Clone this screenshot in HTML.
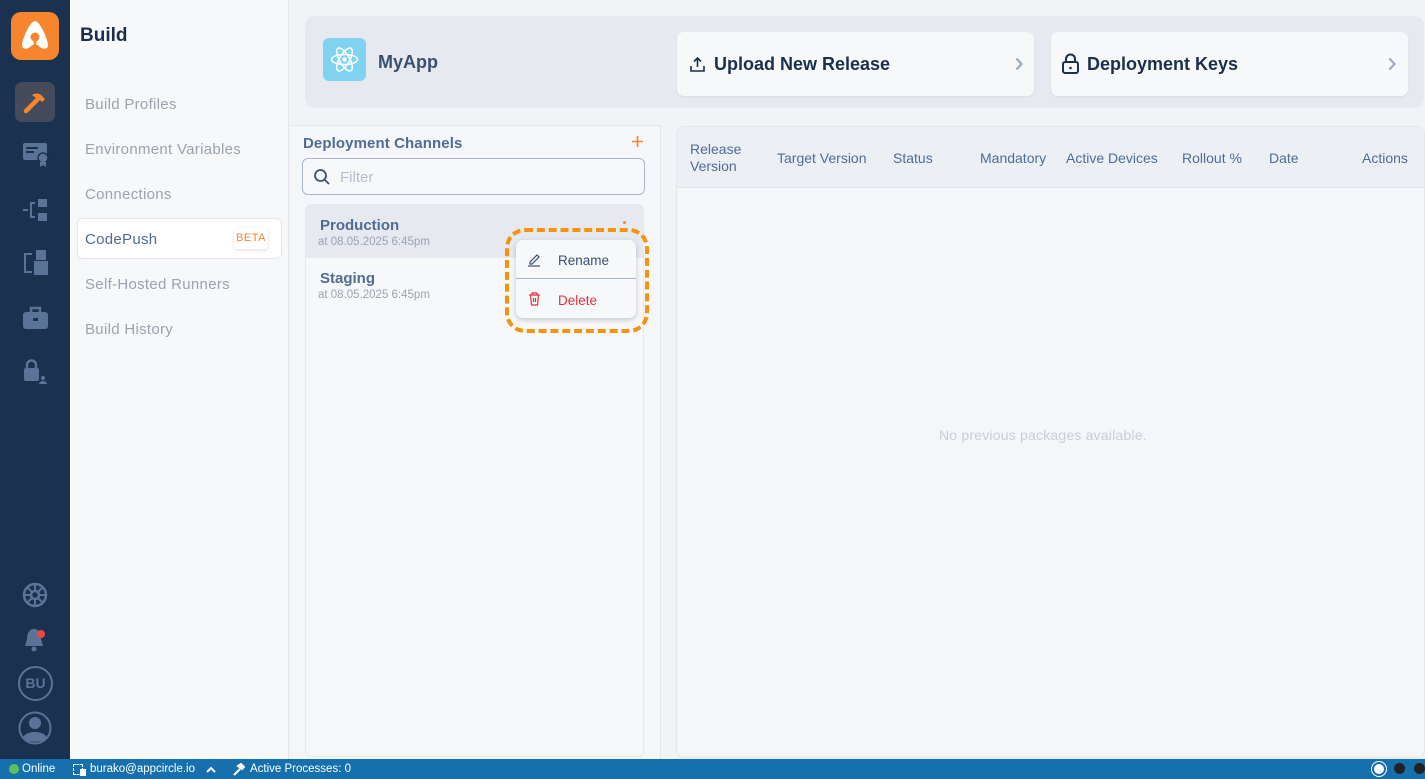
<!DOCTYPE html>
<html><head><style>
*{box-sizing:border-box;margin:0;padding:0}
body{width:1425px;height:779px;overflow:hidden;font-family:"Liberation Sans",sans-serif;background:#f2f3f7;position:relative}
.abs{position:absolute}
.side{left:0;top:0;width:70px;height:759px;background:#1b3150}
.nav{left:70px;top:0;width:219px;height:759px;background:#f7f8fa;border-right:1px solid #e4e6eb}
.nav .it{position:absolute;left:15px;font-size:15px;color:#9aa3ae;letter-spacing:.3px}
.status{left:0;top:759px;width:1425px;height:20px;background:#1670ad;color:#fff;font-size:11.5px}
.ic{position:absolute;left:22px}
.th{position:absolute;top:150px;font-size:14px;color:#4f6c95}
</style></head><body>
<div class="abs side">
  <div class="abs" style="left:11px;top:12px;width:48px;height:48px;border-radius:10px;background:#f7852d">
    <svg width="48" height="48" viewBox="0 0 48 48"><path d="M24 9 C19 9 11 28 11 33 C11 37 15 38 19 35 L21 33 L27 33 L29 35 C33 38 37 37 37 33 C37 28 29 9 24 9Z" fill="#fff"/><circle cx="24" cy="25" r="4.5" fill="#f7852d"/><rect x="22.6" y="28" width="2.8" height="7" fill="#f7852d"/></svg>
  </div>
  <div class="abs" style="left:15px;top:82px;width:40px;height:40px;border-radius:7px;background:#444b5a">
    <svg width="40" height="40" viewBox="0 0 40 40"><path d="M11 29 L22 18" stroke="#f7852d" stroke-width="4.5" stroke-linecap="round"/><path d="M17 13 C20 11 24 11 26 13 L30 17 L27 20 L25 18 L22 21 L19 18 L21 16 Z" fill="#f7852d"/></svg>
  </div>
  <svg class="ic" style="top:140px" width="28" height="28" viewBox="0 0 28 28"><rect x="1" y="3" width="24" height="17" rx="2" fill="#5b7396"/><rect x="4" y="7" width="12" height="2" fill="#1b3150"/><rect x="4" y="11" width="8" height="2" fill="#1b3150"/><circle cx="21" cy="18" r="5" fill="#5b7396" stroke="#1b3150" stroke-width="1.5"/><path d="M18 22 L18 27 L21 25 L24 27 L24 22" fill="#5b7396"/></svg>
  <svg class="ic" style="top:197px" width="28" height="28" viewBox="0 0 28 28"><rect x="16" y="2" width="9" height="8" fill="#5b7396"/><rect x="16" y="16" width="9" height="8" fill="#5b7396"/><path d="M1 13 H6 M13 6 H9 V20 H13" stroke="#5b7396" stroke-width="2" fill="none"/></svg>
  <svg class="ic" style="top:248px" width="28" height="30" viewBox="0 0 28 30"><rect x="14" y="2" width="10" height="10" fill="#5b7396"/><rect x="12" y="13" width="14" height="14" fill="#5b7396"/><path d="M10 6 H3 V24 H10" stroke="#5b7396" stroke-width="2" fill="none"/></svg>
  <svg class="ic" style="top:305px" width="28" height="28" viewBox="0 0 28 28"><rect x="1" y="7" width="25" height="17" rx="3" fill="#5b7396"/><path d="M9 7 V3 H18 V7" stroke="#5b7396" stroke-width="2.5" fill="none"/><rect x="11" y="13" width="5" height="3" fill="#1b3150"/></svg>
  <svg class="ic" style="top:358px" width="28" height="28" viewBox="0 0 28 28"><rect x="2" y="10" width="15" height="13" rx="2" fill="#5b7396"/><path d="M5 10 V7 a4.5 4.5 0 0 1 9 0 V10" stroke="#5b7396" stroke-width="2.5" fill="none"/><circle cx="21" cy="20" r="2" fill="#5b7396"/><path d="M17 26 a4 3 0 0 1 8 0Z" fill="#5b7396"/></svg>
  <svg class="ic" style="top:582px" width="26" height="26" viewBox="0 0 26 26"><circle cx="13" cy="13" r="11" stroke="#5b7396" stroke-width="2.5" fill="none"/><circle cx="13" cy="13" r="4" stroke="#5b7396" stroke-width="2.5" fill="none"/><path d="M13 2V9M13 17V24M2 13H9M17 13H24M5 5L10 10M16 16L21 21M21 5L16 10M10 16L5 21" stroke="#5b7396" stroke-width="2"/></svg>
  <svg class="ic" style="top:626px" width="28" height="28" viewBox="0 0 28 28"><path d="M12 3 C7 3 5 8 5 13 L3 20 H21 L19 13 C19 8 17 3 12 3Z" fill="#5b7396"/><circle cx="12" cy="23" r="2.5" fill="#5b7396"/><circle cx="19" cy="8" r="4" fill="#ef4444"/></svg>
  <div class="abs" style="left:18px;top:666px;width:35px;height:35px;border:2px solid #5b7396;border-radius:50%;color:#5b7396;font-size:14px;font-weight:bold;text-align:center;line-height:31px">BU</div>
  <svg class="abs" style="left:18px;top:711px" width="34" height="34" viewBox="0 0 34 34"><circle cx="17" cy="17" r="15.5" stroke="#5b7396" stroke-width="2" fill="none"/><circle cx="17" cy="12" r="6" fill="#5b7396"/><path d="M5 27 C7 19 27 19 29 27 C25 32 9 32 5 27Z" fill="#5b7396"/></svg>
</div>
<div class="abs nav">
  <div class="abs" style="left:10px;top:25px;font-size:19px;font-weight:bold;color:#1b2f4d">Build</div>
  <div class="it" style="top:96px">Build Profiles</div>
  <div class="it" style="top:141px">Environment Variables</div>
  <div class="it" style="top:186px">Connections</div>
  <div class="abs" style="left:7px;top:218px;width:205px;height:41px;background:#fff;border:1px solid #e4e6eb;border-radius:6px"></div>
  <div class="it" style="top:231px;color:#4f6c95">CodePush</div>
  <div class="abs" style="left:164px;top:228px;width:34px;height:21px;background:#fff;box-shadow:0 1px 3px rgba(0,0,0,.15);border-radius:3px;color:#f7852d;font-size:11px;text-align:center;line-height:21px;letter-spacing:.5px">BETA</div>
  <div class="it" style="top:276px">Self-Hosted Runners</div>
  <div class="it" style="top:321px">Build History</div>
</div>
<!-- header -->
<div class="abs" style="left:305px;top:16px;width:1119px;height:92px;background:#e6e9f0;border-radius:10px"></div>
<div class="abs" style="left:323px;top:38px;width:43px;height:43px;background:#7fd3f0;border-radius:6px">
  <svg width="43" height="43" viewBox="0 0 43 43"><g stroke="#fff" stroke-width="1.5" fill="none"><ellipse cx="21.5" cy="21.5" rx="13" ry="5"/><ellipse cx="21.5" cy="21.5" rx="13" ry="5" transform="rotate(60 21.5 21.5)"/><ellipse cx="21.5" cy="21.5" rx="13" ry="5" transform="rotate(-60 21.5 21.5)"/></g><circle cx="21.5" cy="21.5" r="2.3" fill="#fff"/></svg>
</div>
<div class="abs" style="left:378px;top:52px;font-size:18px;font-weight:bold;color:#3b4f6e">MyApp</div>
<div class="abs" style="left:677px;top:32px;width:357px;height:64px;background:#f7f8fa;border-radius:7px;box-shadow:0 1px 2px rgba(0,0,0,.06)">
  <svg class="abs" style="left:12px;top:24px" width="17" height="17" viewBox="0 0 17 17"><path d="M8.5 11V2M5 5.5L8.5 2L12 5.5M2 10V15H15V10" stroke="#1b2f4d" stroke-width="1.6" fill="none"/></svg>
  <div class="abs" style="left:37px;top:22px;font-size:18px;font-weight:bold;color:#1b2f4d">Upload New Release</div>
  <svg class="abs" style="left:338px;top:25px" width="8" height="14" viewBox="0 0 8 14"><path d="M1.5 1.5L6.5 7L1.5 12.5" stroke="#9aabc0" stroke-width="2.2" fill="none"/></svg>
</div>
<div class="abs" style="left:1051px;top:32px;width:357px;height:64px;background:#f7f8fa;border-radius:7px;box-shadow:0 1px 2px rgba(0,0,0,.06)">
  <svg class="abs" style="left:10px;top:21px" width="20" height="22" viewBox="0 0 20 22"><rect x="2" y="9" width="15" height="11" rx="2" stroke="#1b2f4d" stroke-width="2" fill="none"/><path d="M5 9V6a4.5 4.5 0 0 1 9 0V9" stroke="#1b2f4d" stroke-width="2" fill="none"/><circle cx="9.5" cy="15" r="1.3" fill="#1b2f4d"/></svg>
  <div class="abs" style="left:36px;top:22px;font-size:18px;font-weight:bold;color:#1b2f4d">Deployment Keys</div>
  <svg class="abs" style="left:337px;top:25px" width="8" height="14" viewBox="0 0 8 14"><path d="M1.5 1.5L6.5 7L1.5 12.5" stroke="#9aabc0" stroke-width="2.2" fill="none"/></svg>
</div>
<!-- left panel -->
<div class="abs" style="left:290px;top:125px;width:371px;height:634px;background:#f5f6f9;border-top:1px solid #e4e6eb;border-right:1px solid #e4e6eb"></div>
<div class="abs" style="left:303px;top:135px;font-size:15px;color:#4f6c95;font-weight:bold;letter-spacing:.1px">Deployment Channels</div>
<svg class="abs" style="left:631px;top:135px" width="13" height="13" viewBox="0 0 13 13"><path d="M6.5 1V12M1 6.5H12" stroke="#f7852d" stroke-width="1.6"/></svg>
<div class="abs" style="left:302px;top:158px;width:343px;height:37px;border:1px solid #a9b6c8;border-radius:6px;background:#f7f8fa">
  <svg class="abs" style="left:10px;top:9px" width="18" height="18" viewBox="0 0 18 18"><circle cx="7.5" cy="7.5" r="5.5" stroke="#3b4f6e" stroke-width="1.8" fill="none"/><path d="M11.5 11.5L16 16" stroke="#3b4f6e" stroke-width="1.8"/></svg>
  <div class="abs" style="left:37px;top:10px;font-size:15px;color:#b4bfcd">Filter</div>
</div>
<div class="abs" style="left:305px;top:204px;width:339px;height:553px;background:#f7f8fa;border:1px solid #e6e8ed;border-radius:6px;overflow:hidden">
  <div style="height:53px;background:#e6e9f0"></div>
</div>
<div class="abs" style="left:320px;top:217px;font-size:15px;color:#4f6c95;font-weight:bold">Production</div>
<div class="abs" style="left:318px;top:236px;font-size:11.5px;color:#9aa3ae">at 08.05.2025 6:45pm</div>
<div class="abs" style="left:320px;top:270px;font-size:15px;color:#4f6c95;font-weight:bold">Staging</div>
<div class="abs" style="left:318px;top:289px;font-size:11.5px;color:#9aa3ae">at 08.05.2025 6:45pm</div>
<div class="abs" style="left:623px;top:221px;width:3px;height:3px;background:#f7852d;border-radius:50%"></div>
<!-- dashed highlight -->
<div class="abs" style="left:505px;top:228px;width:144px;height:105px;border:4px dashed #f7920d;border-radius:20px"></div>
<div class="abs" style="left:516px;top:240px;width:120px;height:78px;background:#f7f8fa;border-radius:7px;box-shadow:0 2px 6px rgba(0,0,0,.2)">
  <svg class="abs" style="left:11px;top:12px" width="15" height="15" viewBox="0 0 15 15"><path d="M3 10L10 3L12 5L5 12H3Z" stroke="#3b4f6e" stroke-width="1.2" fill="none"/><path d="M1 14H13" stroke="#3b4f6e" stroke-width="1.2"/></svg>
  <div class="abs" style="left:42px;top:13px;font-size:13.5px;color:#3b4f6e">Rename</div>
  <div class="abs" style="left:0;top:38px;width:120px;height:1px;background:#a9b6c8"></div>
  <svg class="abs" style="left:12px;top:52px" width="13" height="14" viewBox="0 0 13 14"><path d="M1 3H12M4 3V1H9V3M2.5 3L3.5 13H9.5L10.5 3M5.5 6V10M7.5 6V10" stroke="#e0303b" stroke-width="1.2" fill="none"/></svg>
  <div class="abs" style="left:42px;top:53px;font-size:13.5px;color:#e0303b">Delete</div>
</div>
<!-- table -->
<div class="abs" style="left:676px;top:126px;width:749px;height:632px;background:#f5f6f9;border:1px solid #e4e6eb;border-radius:8px;overflow:hidden">
  <div style="height:61px;background:#eceff4;border-bottom:1px solid #e0e4ea"></div>
</div>
<div class="abs" style="top:141px;left:690px;font-size:14px;color:#4f6c95;line-height:17px">Release<br>Version</div>
<div class="th" style="left:777px">Target Version</div>
<div class="th" style="left:893px">Status</div>
<div class="th" style="left:980px">Mandatory</div>
<div class="th" style="left:1066px">Active Devices</div>
<div class="th" style="left:1182px">Rollout %</div>
<div class="th" style="left:1269px">Date</div>
<div class="th" style="left:1362px">Actions</div>
<div class="abs" style="top:427px;left:939px;font-size:14px;color:#c8cfd9;letter-spacing:.2px">No previous packages available.</div>
<!-- status -->
<div class="abs status">
  <div class="abs" style="left:9px;top:5px;width:10px;height:10px;border-radius:50%;background:#5cc15a"></div>
  <div class="abs" style="left:22px;top:4px">Online</div>
  <div class="abs" style="left:73px;top:5px;width:10px;height:11px;border:1px dashed #fff"></div>
  <div class="abs" style="left:80px;top:10px;width:6px;height:7px;background:#fff"></div>
  <div class="abs" style="left:90px;top:4px">burako@appcircle.io</div>
  <svg class="abs" style="left:206px;top:7px" width="10" height="7" viewBox="0 0 10 7"><path d="M1 6L5 2L9 6" stroke="#fff" stroke-width="2" fill="none"/></svg>
  <svg class="abs" style="left:232px;top:4px" width="13" height="13" viewBox="0 0 13 13"><path d="M2 12L8 6M6 3L9 1L12 4L10 6Z" stroke="#fff" stroke-width="2" fill="#fff"/></svg>
  <div class="abs" style="left:250px;top:4px">Active Processes: 0</div>
  <div class="abs" style="left:1372px;top:3px;width:14px;height:14px;border-radius:50%;background:#fff;border:2px solid #1670ad;box-shadow:0 0 0 1px #fff"></div>
  <div class="abs" style="left:1394px;top:4px;width:11px;height:11px;border-radius:50%;background:#222"></div>
  <div class="abs" style="left:1414px;top:4px;width:11px;height:11px;border-radius:50%;background:#222"></div>
</div>
</body></html>
